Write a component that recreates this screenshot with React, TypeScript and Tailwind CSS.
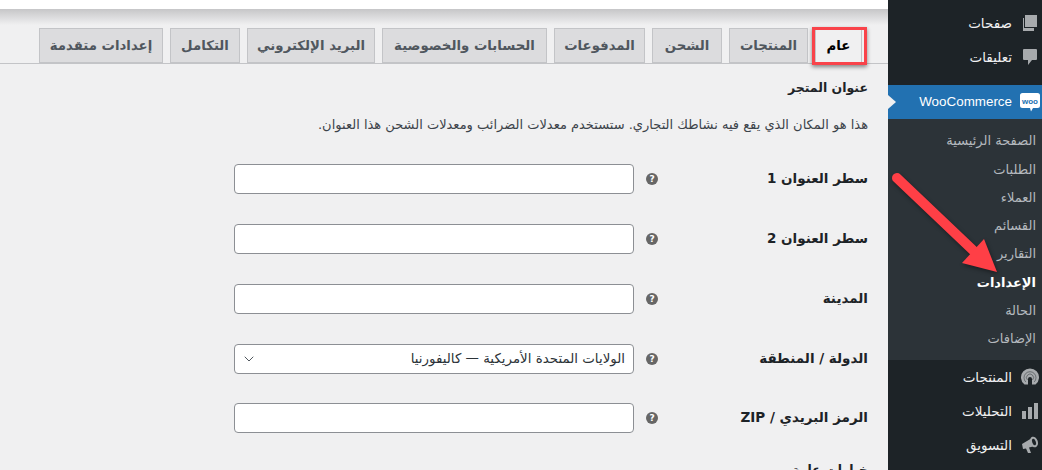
import { ChevronDown } from 'lucide-react';

const tabs = [
  { label: 'المنتجات', width: 'w-[79px]' },
  { label: 'الشحن', width: 'w-[70px]' },
  { label: 'المدفوعات', width: 'w-[91px]' },
  { label: 'الحسابات والخصوصية', width: 'w-[165px]' },
  { label: 'البريد الإلكتروني', width: 'w-[128px]' },
  { label: 'التكامل', width: 'w-[70px]' },
  { label: 'إعدادات متقدمة', width: 'w-[124px]' },
];

const submenu = ['الصفحة الرئيسية', 'الطلبات', 'العملاء', 'القسائم', 'التقارير', 'الإعدادات', 'الحالة', 'الإضافات'];

function PagesIcon() {
  return (
    <svg width="18" height="18" viewBox="0 0 18 18" fill="currentColor">
      <path d="M4 1h12v12H4z" />
      <path d="M2 4h1v10h10v3H2z" />
    </svg>
  );
}

function CommentIcon() {
  return (
    <svg width="18" height="18" viewBox="0 0 18 18" fill="currentColor">
      <path d="M3 1h12a1 1 0 0 1 1 1v9a1 1 0 0 1-1 1h-4l-4 5v-5H3a1 1 0 0 1-1-1V2a1 1 0 0 1 1-1z" />
    </svg>
  );
}

function WooIcon() {
  return (
    <svg width="20" height="20" viewBox="0 0 20 20">
      <path d="M2.500 1h15A2.500 2.500 0 0 1 20 3.500v10a2.500 2.500 0 0 1-2.500 2.500H13l-2 3.500L10 16H2.500A2.500 2.500 0 0 1 0 13.500v-10A2.500 2.500 0 0 1 2.500 1z" fill="#fff" />
      <text x="10" y="12" textAnchor="middle" fontSize="8" fontWeight="700" fontFamily="Liberation Sans, sans-serif" fill="#2271b1">woo</text>
    </svg>
  );
}

function ProductsIcon() {
  return (
    <svg width="18" height="18" viewBox="0 0 18 18" fill="none">
      <path d="M3.500 16.500A9 9 0 1 1 14.500 16.500L11 16.500V11a2 2 0 0 0-4 0v5.500z" fill="currentColor" />
      <path d="M4.800 14A6 6 0 1 1 13.200 14" stroke="#1d2327" strokeOpacity="0.45" strokeWidth="1" />
      <path d="M6.500 12A3.500 3.500 0 1 1 11.500 12" stroke="#1d2327" strokeOpacity="0.45" strokeWidth="1" />
    </svg>
  );
}

function AnalyticsIcon() {
  return (
    <svg width="18" height="18" viewBox="0 0 18 18" fill="currentColor">
      <path d="M1 9h4v8H1zM7 5h4v12H7zM13 1h4v16h-4z" />
    </svg>
  );
}

function MegaphoneIcon() {
  return (
    <svg width="18" height="18" viewBox="0 0 18 18" fill="currentColor">
      <path d="M1 8 11 2l3 8-6 1.500 2 5.500H7L5 12.500 2 13z" />
      <ellipse cx="13" cy="6" rx="3.800" ry="5.500" transform="rotate(-18 13 6)" />
      <ellipse cx="13" cy="6" rx="1.800" ry="3.300" transform="rotate(-18 13 6)" fill="#1d2327" />
    </svg>
  );
}

function MenuItem({ icon, label }: { icon: React.ReactNode; label: string }) {
  return (
    <div className="flex h-[34px] items-center text-[13.5px] text-[#f0f0f1]">
      <div className="flex w-[24px] justify-center text-[#a7aaad]">{icon}</div>
      <span className="mr-[6px]">{label}</span>
    </div>
  );
}

function HelpIcon() {
  return (
    <span className="flex h-3 w-3 items-center justify-center rounded-full bg-[#666] text-[9px] font-bold leading-none text-white">?</span>
  );
}

function Row({ label, tight, children }: { label: string; tight?: boolean; children?: React.ReactNode }) {
  return (
    <div className={`flex h-[30px] items-center ${tight ? 'mb-[29px]' : 'mb-[30px]'}`}>
      <div className="mb-[2px] w-[210px] text-[13.5px] font-bold text-[#1d2327]">{label}</div>
      <HelpIcon />
      <div className="relative mr-3 flex h-[30px] w-[400px] items-center rounded border border-[#8c8f94] bg-white pl-[6px] pr-2 text-[13.4px] text-[#2c3338]">
        {children}
      </div>
    </div>
  );
}

export default function App() {
  return (
    <div dir="rtl" className="relative flex h-[470px] w-[1042px] overflow-hidden bg-[#f0f0f1] font-['DejaVu_Sans','Noto_Sans',sans-serif]">
      {/* Admin sidebar */}
      <aside className="relative h-full w-[154px] shrink-0 bg-[#1d2327] pt-[6px]">
        <MenuItem icon={<PagesIcon />} label="صفحات" />
        <MenuItem icon={<CommentIcon />} label="تعليقات" />
        <div className="relative mt-[11px] flex h-[34px] items-center bg-[#2271b1] text-white">
          <div className="flex w-[24px] justify-center"><WooIcon /></div>
          <span dir="ltr" className="mr-[6px] font-['Liberation_Sans',sans-serif] text-[13.4px]">WooCommerce</span>
          <span className="absolute left-0 top-[10px] h-0 w-0 border-y-[7px] border-l-[8px] border-y-transparent border-l-[#f0f0f1]" />
        </div>
        <div className="bg-[#2c3338] pb-[7px] pt-[8px]">
          {submenu.map((item) => (
            <div
              key={item}
              className={`flex h-[28.25px] items-center pr-[6px] text-[13px] ${item === 'الإعدادات' ? 'font-bold text-white' : 'text-[#b4b9be]'}`}
            >
              {item}
            </div>
          ))}
        </div>
        <MenuItem icon={<ProductsIcon />} label="المنتجات" />
        <MenuItem icon={<AnalyticsIcon />} label="التحليلات" />
        <MenuItem icon={<MegaphoneIcon />} label="التسويق" />
      </aside>

      {/* Settings page */}
      <main className="min-w-0 flex-1">
        <div className="h-[9px] bg-white" />
        <div className="h-[16px] bg-gradient-to-b from-[#c6c6c8] to-[#f0f0f1]" />
        <nav className="mt-[3px] flex h-[36px] gap-[7px] border-b border-[#c3c4c7] pr-[26px]">
          <div className="flex h-[36px] w-[47px] items-center justify-center border border-[#c3c4c7] border-b-[#f0f0f1] bg-[#f0f0f1] text-[13.3px] font-bold text-black">عام</div>
          {tabs.map((tab) => (
            <div
              key={tab.label}
              className={`flex h-[35px] items-center justify-center border border-[#c3c4c7] bg-[#dcdcde] text-[13.3px] font-bold text-[#50575e] ${tab.width}`}
            >
              {tab.label}
            </div>
          ))}
        </nav>
        <div className="pr-[20px]">
          <h2 className="mt-[15px] h-[18px] text-[12.5px] font-bold leading-[18px] text-[#1d2327]">عنوان المتجر</h2>
          <p className="mt-[19px] h-[18px] text-[13px] leading-[18px] text-[#3c434a]">
            هذا هو المكان الذي يقع فيه نشاطك التجاري. ستستخدم معدلات الضرائب ومعدلات الشحن هذا العنوان.
          </p>
          <div className="mt-[30px]">
            <Row label="سطر العنوان 1" />
            <Row label="سطر العنوان 2" />
            <Row label="المدينة" />
            <Row label="الدولة / المنطقة" tight>
              <span className="flex-1">الولايات المتحدة الأمريكية — كاليفورنيا</span>
              <ChevronDown className="h-[16px] w-[16px] text-[#50575e]" strokeWidth={1.5} />
            </Row>
            <Row label="الرمز البريدي / ZIP" />
          </div>
          <h2 className="mt-[-2px] text-[12.5px] font-bold text-[#1d2327]">خيارات عامة</h2>
        </div>
      </main>

      {/* Annotations */}
      <div className="pointer-events-none absolute left-[812px] top-[27px] h-[38px] w-[55px] border-[3px] border-[#f9434a] shadow-[0_2px_4px_rgba(0,0,0,0.45)]" />
      <svg className="pointer-events-none absolute left-[885px] top-[165px] drop-shadow-[1px_2px_2px_rgba(0,0,0,0.4)]" width="125" height="120" viewBox="885 165 125 120">
        <path d="M897 178 978 255" stroke="#ff3f46" strokeWidth="10" strokeLinecap="round" />
        <path d="M984 239 997 272 962 263z" fill="#ff3f46" />
      </svg>
    </div>
  );
}
